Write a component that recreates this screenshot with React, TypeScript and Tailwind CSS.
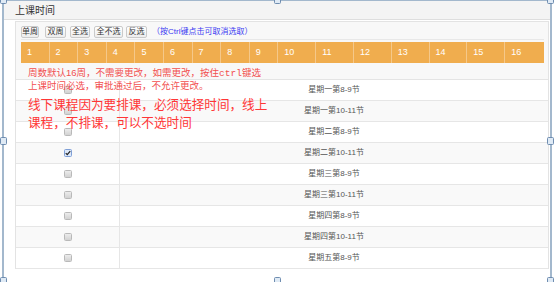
const weeks = ['1', '2', '3', '4', '5', '6', '7', '8', '9', '10', '11', '12', '13', '14', '15', '16']

const slots = [
    { label: '星期一第8-9节', checked: false },
    { label: '星期一第10-11节', checked: false },
    { label: '星期二第8-9节', checked: false },
    { label: '星期二第10-11节', checked: true },
    { label: '星期三第8-9节', checked: false },
    { label: '星期三第10-11节', checked: false },
    { label: '星期四第8-9节', checked: false },
    { label: '星期四第10-11节', checked: false },
    { label: '星期五第8-9节', checked: false },
]

const buttons = [
    { text: '单周', cls: 'w-[18px] ml-0' },
    { text: '双周', cls: 'w-[21px] ml-[6px]' },
    { text: '全选', cls: 'w-[20px] ml-[4px]' },
    { text: '全不选', cls: 'w-[29px] ml-[4px]' },
    { text: '反选', cls: 'w-[21px] ml-[3px]' },
]

// selection handles of the editor frame
const handles = [
    'left-0 -top-[4px]',
    'left-[274px] -top-[4px]',
    'left-[547px] -top-[4px]',
    'left-0 top-[137px]',
    'left-[547px] top-[137px]',
    'left-0 top-[277px]',
    'left-[274px] top-[277px]',
    'left-[547px] top-[277px]',
]

const Checkbox = ({ checked }: { checked: boolean }) =>
    checked ? (
        <span className="w-[8px] h-[8px] rounded-[1.5px] border border-[#7f9fd6] bg-[#dce8fa] flex items-center justify-center">
            <svg viewBox="0 0 8 8" className="w-[6px] h-[6px]">
                <path d="M1 4.2 L3 6.2 L7 1.5" fill="none" stroke="#222" strokeWidth={1.6} />
            </svg>
        </span>
    ) : (
        <span className="w-[8px] h-[8px] rounded-[1.5px] border border-[#b9b9b9] bg-gradient-to-b from-[#ececec] to-[#d2d2d2]" />
    )

export default function App() {
    return (
        <div className="relative w-[554px] h-[282px] bg-white overflow-hidden font-['Liberation_Sans','Noto_Sans_CJK_SC',sans-serif]">
            {/* Frame */}
            <div className="ml-[2px] w-[550px] h-[284px] border-l-2 border-r-2 border-t border-[#a3b8cd] flex flex-col">
                {/* Header */}
                <div className="h-[19px] bg-[#f4f4f4] border-b border-[#dedede] pl-[11px] flex items-center text-[10px] text-[#333]">
                    上课时间
                </div>

                {/* Body */}
                <div className="mt-[1px] ml-[11px] mr-[1px] border border-b-0 border-[#e3e3e3] bg-[#f8f8f8] flex flex-col">
                    {/* Toolbar */}
                    <div className="ml-[5px] mr-[4px] pt-[4px] pb-[1px] border-b border-[#e8e8e8] flex items-center">
                        {buttons.map(b => (
                            <span
                                key={b.text}
                                className={`${b.cls} h-[12px] rounded-[2px] border border-[#cacaca] bg-gradient-to-b from-white to-[#ededed] text-[8px] leading-none text-[#333] flex items-center justify-center`}
                            >
                                {b.text}
                            </span>
                        ))}
                        <span className="ml-[5px] text-[8px] leading-none text-[#3a3af2]">（按Ctrl键点击可取消选取）</span>
                    </div>

                    {/* Week bar */}
                    <div className="ml-[5px] mr-[4px] mt-[2px] h-[21px] bg-[#f0ad4e] flex">
                        {weeks.map((w, i) => (
                            <div
                                key={w}
                                className={`${i < 9 ? 'w-[28.6px]' : 'w-[37.8px]'} ${i < 15 ? 'border-r border-[#f5c88a]' : ''} h-full flex items-center pl-[6px] text-[9px] text-white`}
                            >
                                {w}
                            </div>
                        ))}
                    </div>

                    <div className="h-[16px]" />

                    {/* Slots table */}
                    <div className="border-t border-[#e4e4e4]">
                        {slots.map((s, i) => (
                            <div
                                key={s.label}
                                className={`h-[21px] flex border-b border-[#e6e6e6] ${i % 2 === 0 ? 'bg-white' : 'bg-[#f9f9f9]'}`}
                            >
                                <div className="w-[104px] border-r border-[#e6e6e6] flex items-center justify-center">
                                    <Checkbox checked={s.checked} />
                                </div>
                                <div className="flex-1 flex items-center justify-center text-[8px] text-[#555]">{s.label}</div>
                            </div>
                        ))}
                    </div>
                </div>
            </div>

            {/* Notices over the table */}
            <div className="absolute left-[28px] top-[67px] text-[9.5px] leading-[11.5px] text-[#f25050] whitespace-nowrap">
                <div>
                    周数默认16周，不需要更改，如需更改，按住<span className="font-['Liberation_Mono',monospace]">ctrl</span>键选
                </div>
                <div>上课时间必选，审批通过后，不允许更改。</div>
            </div>
            <div className="absolute left-[28px] top-[96px] text-[12.6px] leading-[18px] text-[#ff3636] whitespace-nowrap">
                <div>线下课程因为要排课，必须选择时间，线上</div>
                <div>课程，不排课，可以不选时间</div>
            </div>

            {handles.map(h => (
                <span key={h} className={`absolute ${h} w-[7px] h-[8px] rounded-[1.5px] border border-[#6f8db0] bg-[#dfeaf5]`} />
            ))}
        </div>
    )
}
